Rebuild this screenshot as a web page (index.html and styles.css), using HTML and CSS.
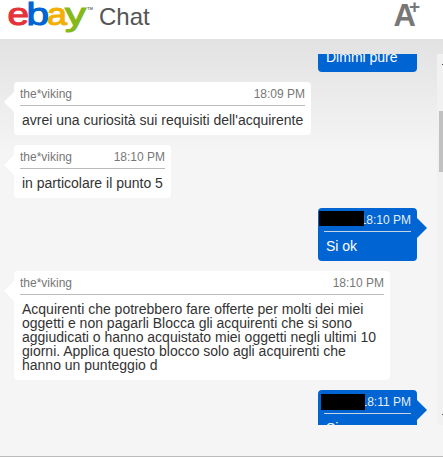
FILE: index.html
```html
<!DOCTYPE html>
<html lang="it">
<head>
    <meta charset="UTF-8">
    <meta name="viewport" content="width=device-width, initial-scale=1.0">
    <title>eBay Chat</title>
    <link rel="stylesheet" href="styles.css">
</head>
<body>
    <header class="chat-header">
        <svg class="logo" width="88" height="36" viewBox="0 0 88 36">
            <text class="logo-e" x="-0.5" y="24.5" textLength="21.5" lengthAdjust="spacingAndGlyphs">e</text>
            <text class="logo-b" x="18.5" y="24.5" textLength="22.5" lengthAdjust="spacingAndGlyphs">b</text>
            <text class="logo-a" x="39" y="24.5" textLength="20" lengthAdjust="spacingAndGlyphs">a</text>
            <text class="logo-y" x="57" y="24.5" textLength="21" lengthAdjust="spacingAndGlyphs">y</text>
            <text class="logo-tm" x="79" y="10">TM</text>
        </svg>
        <h1>Chat</h1>
        <div class="font-size">A<span>+</span></div>
    </header>

    <main class="chat">
        <div class="messages">
            <div class="message mine first">
                <div class="info"><span class="time">18:09 PM</span></div>
                <p>Dimmi pure</p>
            </div>
            <div class="message w-297">
                <div class="info"><span>the*viking</span><span class="time">18:09 PM</span></div>
                <p>avrei una curiosità sui requisiti dell'acquirente</p>
            </div>
            <div class="message w-157">
                <div class="info"><span>the*viking</span><span class="time">18:10 PM</span></div>
                <p>in particolare il punto 5</p>
            </div>
            <div class="message mine">
                <div class="info"><span class="time">18:10 PM</span></div>
                <p>Si ok</p>
                <span class="hidden-name"></span>
            </div>
            <div class="message w-376">
                <div class="info"><span>the*viking</span><span class="time">18:10 PM</span></div>
                <p>Acquirenti che potrebbero fare offerte per molti dei miei<br>
                oggetti e non pagarli Blocca gli acquirenti che si sono<br>
                aggiudicati o hanno acquistato miei oggetti negli ultimi 10<br>
                giorni. Applica questo blocco solo agli acquirenti che<br>
                hanno un punteggio d</p>
            </div>
            <div class="message mine">
                <div class="info"><span class="time">18:11 PM</span></div>
                <p>Si</p>
                <span class="hidden-name last"></span>
            </div>
        </div>
        <div class="scrollbar">
            <span class="arrow"></span>
            <div class="thumb"></div>
            <span class="arrow down"></span>
        </div>
    </main>
</body>
</html>
```

FILE: styles.css
```css
* {
    box-sizing: border-box;
}

body {
    margin: 0;
    height: 457px;
    overflow: hidden;
    font-family: "Liberation Sans", Arial, sans-serif;
    background: #f5f5f5;
}

.chat-header {
    display: flex;
    height: 39px;
    padding: 0 23px 0 8px;
    background: #fff;
}

.logo {
    flex: none;
    overflow: visible;
}

.logo text {
    font-size: 32px;
    stroke-width: 1.1;
}

.logo .logo-e {
    fill: #e53238;
    stroke: #e53238;
}

.logo .logo-b {
    fill: #0064d2;
    stroke: #0064d2;
}

.logo .logo-a {
    fill: #f5af02;
    stroke: #f5af02;
}

.logo .logo-y {
    fill: #86b817;
    stroke: #86b817;
}

.logo .logo-tm {
    font-size: 4px;
    fill: #222;
}

.chat-header h1 {
    margin: 3px 0 0 3px;
    font-size: 24px;
    line-height: 28px;
    font-weight: normal;
    color: #555;
}

.font-size {
    display: flex;
    margin-left: auto;
    font-size: 31px;
    line-height: 32px;
    font-weight: bold;
    color: #777;
}

.font-size span {
    margin: -9px 0 0 -7px;
    font-size: 19px;
}

.chat {
    display: flex;
    height: 418px;
    padding: 15px 0 31px;
    border-bottom: 1px solid #bbb;
    background: linear-gradient(#e2e2e2, #f5f5f5 116px);
}

.messages {
    display: flex;
    flex: 1;
    flex-direction: column;
    align-items: flex-start;
    gap: 10px;
    padding: 0 20px 0 14px;
    overflow: hidden;
}

.message {
    position: relative;
    flex: none;
    padding: 0 6px 8px;
    border-radius: 4px;
    background: #fff;
    color: #333;
}

.message::before {
    content: "";
    position: absolute;
    top: 10px;
    left: -10px;
    border: 10px solid transparent;
    border-left: 0;
    border-right-color: #fff;
}

.info {
    display: flex;
    justify-content: space-between;
    height: 24px;
    border-bottom: 1px solid #bbb;
    font-size: 12px;
    line-height: 24px;
    color: #777;
}

.message p {
    margin: 7px 2px 0;
    font-size: 14px;
    line-height: 14px;
    white-space: nowrap;
}

.w-297 {
    width: 297px;
}

.w-157 {
    width: 157px;
}

.w-376 {
    width: 376px;
}

.mine {
    align-self: flex-end;
    width: 99px;
    background: #0064d2;
    color: #fff;
}

.mine::before {
    left: auto;
    right: -10px;
    border: 10px solid transparent;
    border-right: 0;
    border-left-color: #0064d2;
}

.mine .info {
    border-color: #c5d5e5;
    color: #e5effa;
}

.mine .time {
    margin-left: auto;
}

.first {
    margin-top: -35px;
}

.hidden-name {
    position: absolute;
    top: 3px;
    left: 1px;
    width: 45px;
    height: 15px;
    background: #000;
}

.hidden-name.last {
    top: 4px;
    left: 3px;
    width: 44px;
    height: 16px;
}

.scrollbar {
    display: flex;
    flex-direction: column;
    align-items: flex-end;
    width: 6px;
    background: #f1f1f1;
}

.arrow {
    width: 1px;
    height: 1px;
    margin-top: 10px;
    background: #505050;
}

.thumb {
    width: 4px;
    height: 61px;
    margin-top: 46px;
    background: #c1c1c1;
}

.arrow.down {
    margin: auto 0 10px;
}
```
